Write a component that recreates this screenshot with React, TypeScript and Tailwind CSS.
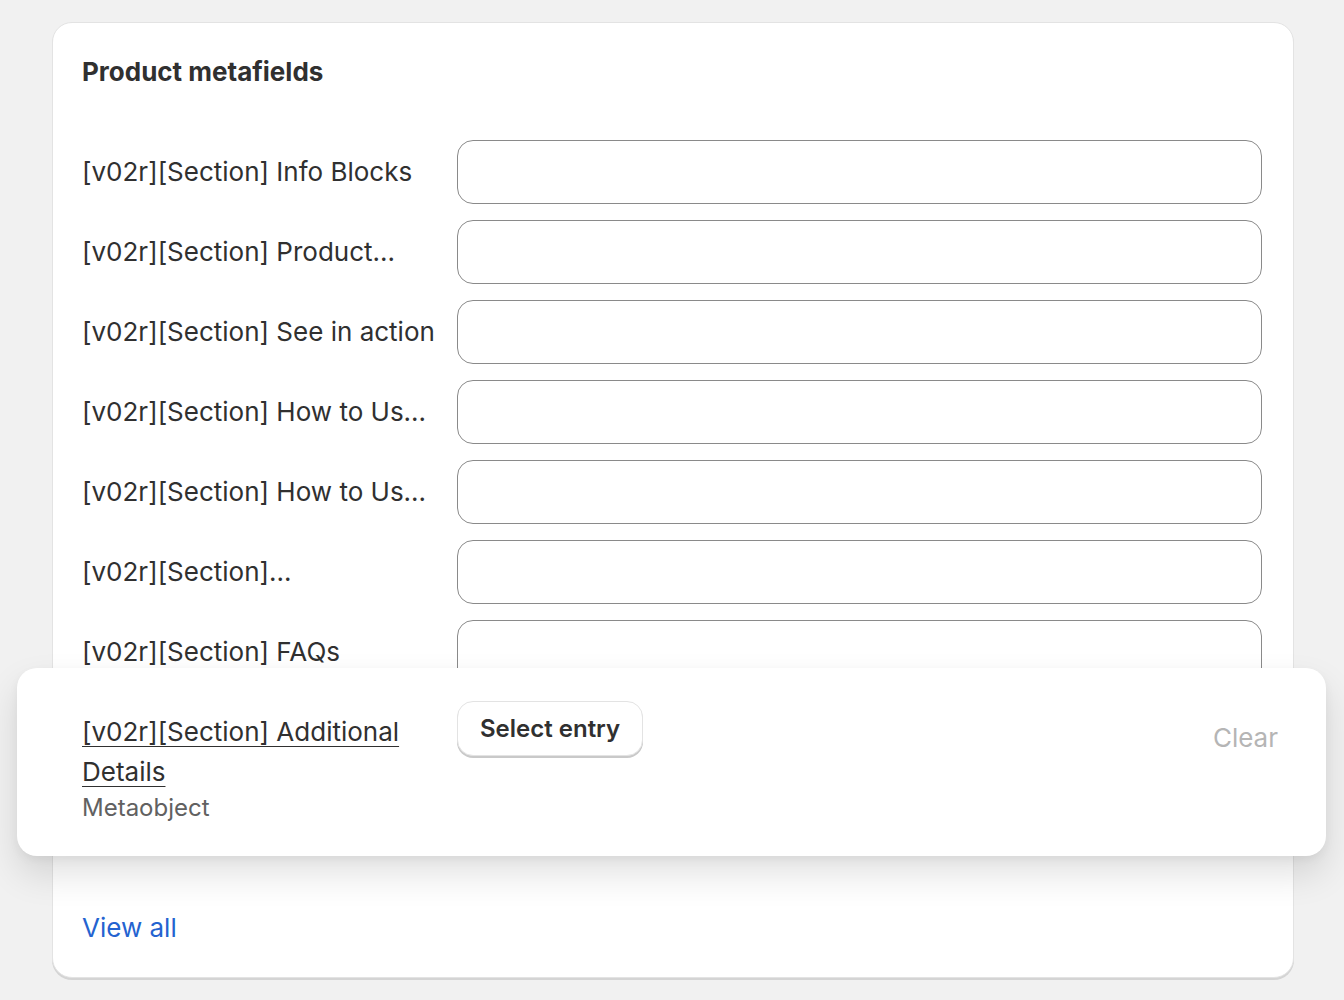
import type React from "react"

const rows = [
    "[v02r][Section] Info Blocks",
    "[v02r][Section] Product...",
    "[v02r][Section] See in action",
    "[v02r][Section] How to Us...",
    "[v02r][Section] How to Us...",
    "[v02r][Section]...",
    "[v02r][Section] FAQs",
];

const font = { fontFamily: "Inter, 'Noto Sans', sans-serif" };

const App: React.FC = () => {
    return (
        <div className="min-h-screen bg-[#f1f1f1] pt-[22px] pl-[52px] pr-[50px] overflow-hidden" style={font}>
            <div className="relative bg-white rounded-[20px] border border-[#e3e3e3] shadow-[0_2px_0_#d4d4d4] pl-[29px] pr-[31px] pt-[29px] pb-[29px] h-[956px] flex flex-col">
                <h2 className="text-[26px] leading-[40px] font-bold text-[#303030]">Product metafields</h2>
                <div className="mt-[48px] flex flex-col gap-4 h-[544px] overflow-hidden">
                    {rows.map((label, i) => (
                        <div key={i} className="grid grid-cols-[375px_1fr] items-center">
                            <span className="text-[26px] leading-[40px] text-[#303030] whitespace-nowrap">{label}</span>
                            <div className="h-16 rounded-[16px] border border-[#8a8a8a] bg-white"></div>
                        </div>
                    ))}
                </div>
                <div className="mt-auto">
                    <a className="text-[26px] leading-[40px] text-[#2463d0]">View all</a>
                </div>

                {/* dragged row floating over the list */}
                <div className="absolute left-[-36px] top-[645px] w-[1309px] h-[188px] bg-white rounded-[20px] shadow-[0_18px_36px_rgba(0,0,0,0.12),0_4px_10px_rgba(0,0,0,0.05)] pl-[65px] pr-[48px] pt-[33px] flex items-start">
                    <div className="w-[375px] mt-[11px] shrink-0">
                        <div className="text-[26px] leading-[40px] text-[#303030] underline decoration-1 underline-offset-[5px] pr-[20px]">
                            [v02r][Section] Additional Details
                        </div>
                        <div className="text-[24px] leading-[32px] text-[#616161]">Metaobject</div>
                    </div>
                    <button className="h-[55px] px-[22px] rounded-[16px] bg-white border border-[#e3e3e3] shadow-[0_2px_0_#c9c9c9] text-[24px] font-semibold text-[#303030]">
                        Select entry
                    </button>
                    <span className="ml-auto mt-[17px] text-[26px] leading-[40px] text-[#b5b5b5]">Clear</span>
                </div>
            </div>
        </div>
    );
};

export default App
